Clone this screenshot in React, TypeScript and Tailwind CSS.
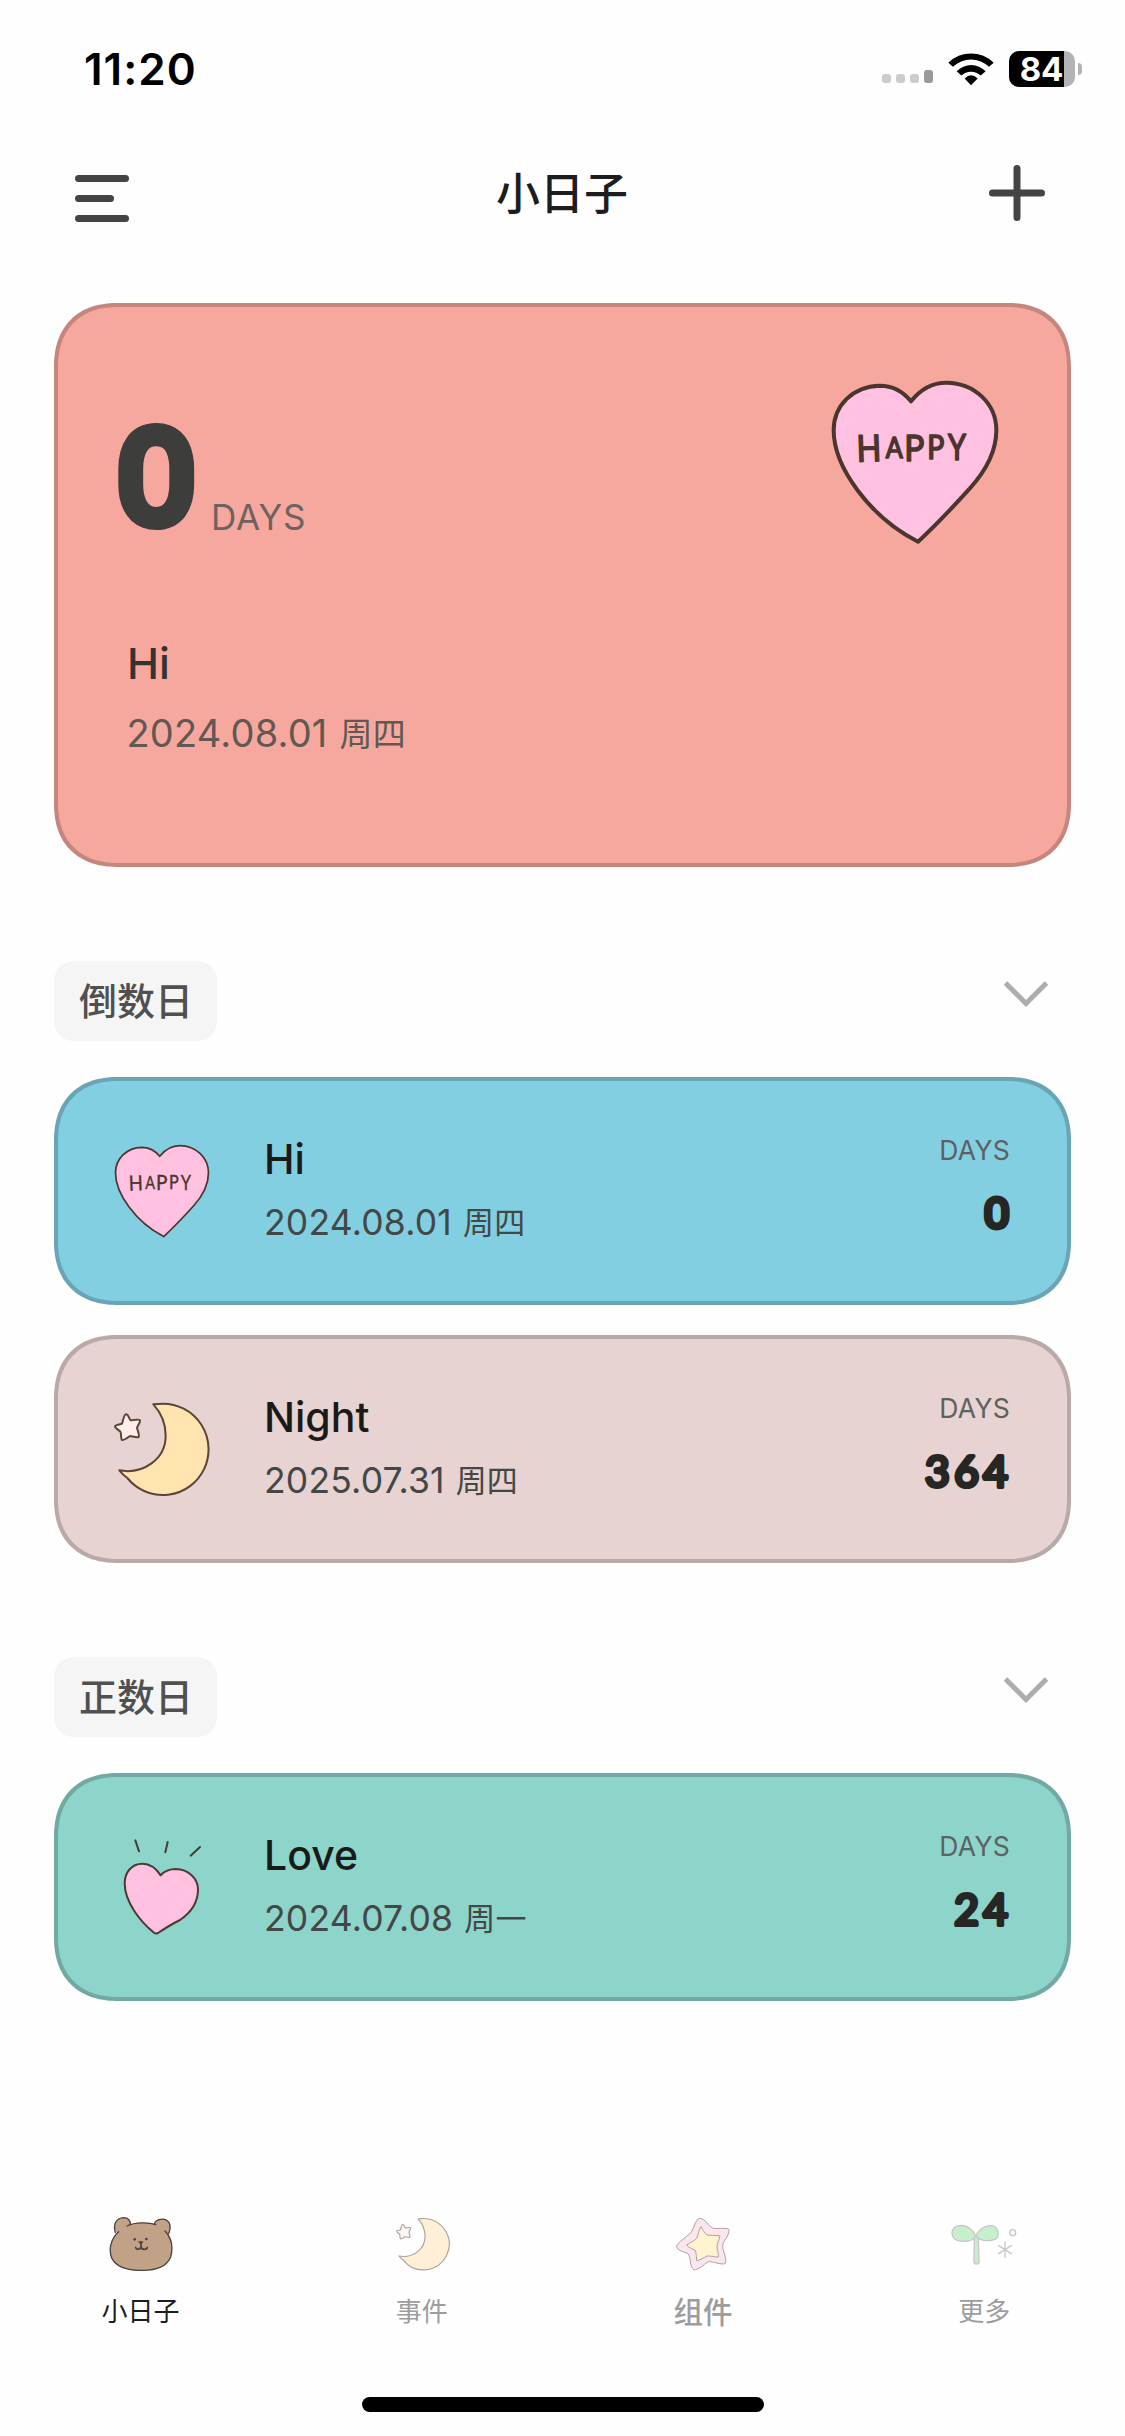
import type { ReactNode } from "react";
import clsx from "clsx";

type IconProps = { className?: string; line?: number };

function HappyHeart({ className, line = 9 }: IconProps) {
  return (
    <svg viewBox="154 263 504 504" className={className} fill="none">
      <path
        d="M394 333C370 303 335 286 300 286C220 288 162 345 162 420C162 530 270 680 415 754C450 722 520 650 570 595C620 540 650 480 650 420C650 340 585 278 500 277C455 277 420 300 394 333Z"
        fill="#ffc1df"
        stroke="#4a352f"
        strokeWidth={line}
        strokeLinejoin="round"
      />
      <g
        fill="#4a352f"
        stroke="#4a352f"
        strokeWidth={line - 7}
        strokeLinejoin="round"
        fontFamily="Lato, sans-serif"
        fontWeight="400"
      >
        <text x="231" y="513" fontSize="110" textLength="74" lengthAdjust="spacingAndGlyphs" transform="rotate(-2 268 475)">H</text>
        <text x="318" y="503" fontSize="86" textLength="51" lengthAdjust="spacingAndGlyphs">A</text>
        <text x="374" y="511" fontSize="112" textLength="60" lengthAdjust="spacingAndGlyphs">P</text>
        <text x="443" y="507" fontSize="96" textLength="51" lengthAdjust="spacingAndGlyphs">P</text>
        <text x="505" y="509" fontSize="108" textLength="54" lengthAdjust="spacingAndGlyphs">Y</text>
      </g>
    </svg>
  );
}

function Moon({ className }: IconProps) {
  return (
    <svg viewBox="222 241 288 288" className={className} stroke="#5c4437" strokeWidth="6" strokeLinejoin="round">
      <path
        d="M340 251Q355 249 369 249A137 137 0 1 1 262 472Q248 462 238 449C310 462 377 415 377 345C377 305 362 275 340 251Z"
        fill="#ffe4b0"
      />
      <path
        d="M258 281C266 281 268 297 272 299C280 298 298 295 300 299C302 305 291 318 291 322C293 328 299 345 296 349C290 352 275 346 270 346C264 350 250 360 246 358C241 353 245 338 241 333C236 328 224 321 225 317C227 312 242 312 246 309C249 300 252 281 258 281Z"
        fill="#ffecec"
      />
    </svg>
  );
}

function LoveHeart({ className }: IconProps) {
  return (
    <svg viewBox="222 597 288 288" className={className} stroke="#4a3a34" strokeWidth="6" strokeLinecap="round" fill="none">
      <path
        d="M362 706C345 680 325 671 308 671C272 671 254 700 254 730C254 785 300 845 343 879Q348 882 354 879C375 865 400 850 420 840C450 820 474 790 474 748C474 715 445 688 408 687C388 687 373 693 362 706Z"
        fill="#ffc1df"
        strokeLinejoin="round"
      />
      <path d="M286 601L297 634M383 606L376 637M480 621L452 647" />
    </svg>
  );
}

function Bear({ className }: IconProps) {
  return (
    <svg viewBox="143 80 198 162" className={className} stroke="#4b433e" strokeWidth="4" strokeLinecap="round" fill="none">
      <path
        d="M165 125C158 102 166 83 190 82C203 82 211 92 210 103C228 96 262 96 281 102C285 89 300 85 312 87C332 92 334 113 325 130C335 150 339 175 331 200C320 227 290 240 247 240C206 241 170 232 155 205C146 180 150 147 172 127Z"
        fill="#c2a287"
        stroke="none"
      />
      <path d="M165 127C158 103 166 83 190 82C204 82 211 92 210 103M281 102C285 89 300 85 312 87C331 92 333 112 325 130" />
      <path d="M200 107C225 95 265 96 287 103M175 124C150 146 144 180 155 205C170 232 206 241 247 240C290 240 320 227 331 200C339 170 333 142 314 122" />
      <path d="M242 160V168M226 171C226 178 241 180 242 168C243 180 260 179 261 171" strokeWidth="5" />
      <path d="M237 155H246L242 161Z" fill="#4b433e" />
      <circle cx="223" cy="147" r="4" fill="#4b433e" stroke="none" />
      <circle cx="258" cy="146" r="4" fill="#4b433e" stroke="none" />
    </svg>
  );
}

function WidgetStar({ className }: IconProps) {
  return (
    <svg viewBox="149 80 198 162" className={className} stroke="#ada1a4" strokeWidth="3" strokeLinejoin="round">
      <path
        d="M238 84C256 84 266 112 280 114C300 116 326 110 326 120C326 140 306 152 307 168C308 185 322 210 314 220C300 224 280 213 264 214C250 222 235 240 220 238C208 230 212 200 203 190C190 184 168 180 169 168C172 155 200 140 212 126C222 112 226 86 238 84Z"
        fill="#fbe5ee"
      />
      <path
        d="M242 109C248 120 254 130 260 134C272 136 288 134 299 137C296 150 290 160 290 168C290 180 296 192 294 200C282 200 270 196 260 197C250 202 240 210 229 211C228 200 228 190 225 180C216 176 205 172 199 164C210 156 222 152 229 144C234 132 236 118 242 109Z"
        fill="#fff4cf"
      />
    </svg>
  );
}

function Sprout({ className }: IconProps) {
  return (
    <svg viewBox="993 80 198 162" className={className} stroke="#c9c5c6" strokeWidth="4" strokeLinecap="round" fill="none">
      <path d="M1063 142L1062 215Q1062 221 1069 221Q1077 221 1077 215L1075 142" fill="#c6f0cd" />
      <path
        d="M1067 137C1055 112 1035 104 1018 106C1000 108 994 122 997 134C1000 150 1015 153 1030 153C1048 153 1062 150 1067 137C1080 112 1100 104 1115 106C1135 110 1137 130 1132 142C1122 152 1100 152 1090 150C1080 148 1072 143 1067 137Z"
        fill="#c6f0cd"
      />
      <circle cx="1178" cy="127" r="9" />
      <path d="M1155 155V200M1136 166L1174 190M1136 190L1174 166" />
    </svg>
  );
}

// Rounded numerals: thin glyphs thickened by a round-joined stroke
function DayCount({ value }: { value: string }) {
  const zero = value === "0";
  return (
    <svg width="130" height="62" viewBox="0 0 130 62" className="overflow-visible text-[#262624]">
      <text
        x={zero ? 128.5 : 132.5}
        y={zero ? 45.2 : 46.5}
        textAnchor="end"
        fontFamily={zero ? "Roboto, sans-serif" : "Lato, sans-serif"}
        fontWeight={zero ? 100 : 400}
        fontSize={zero ? 39.5 : 42.5}
        textLength={zero ? 23.5 : undefined}
        lengthAdjust="spacingAndGlyphs"
        letterSpacing={zero ? 0 : 4.5}
        fill="currentColor"
        stroke="currentColor"
        strokeWidth={zero ? 7 : 4.2}
        strokeLinejoin="round"
      >
        {value}
      </text>
    </svg>
  );
}

type EventItem = {
  title: string;
  date: string;
  weekday: string;
  days: string;
  color: string;
  icon: ReactNode;
};

const countdown: EventItem[] = [
  {
    title: "Hi",
    date: "2024.08.01",
    weekday: "周四",
    days: "0",
    color: "bg-[#83cfe2] border-[#69a5b4]",
    icon: <HappyHeart className="size-24" />,
  },
  {
    title: "Night",
    date: "2025.07.31",
    weekday: "周四",
    days: "364",
    color: "bg-[#e7d3d1] border-[#b9a9a7]",
    icon: <Moon className="size-24" />,
  },
];

const elapsed: EventItem[] = [
  {
    title: "Love",
    date: "2024.07.08",
    weekday: "周一",
    days: "24",
    color: "bg-[#8dd5cb] border-[#71aaa2]",
    icon: <LoveHeart className="size-24" />,
  },
];

const tabs = [
  { label: "小日子", icon: <Bear className="h-[54px] w-[66px]" />, active: true },
  { label: "事件", icon: <Moon className="ml-0.5 size-[54px] opacity-50" /> },
  { label: "组件", icon: <WidgetStar className="h-[54px] w-[66px]" />, large: true },
  { label: "更多", icon: <Sprout className="h-[54px] w-[66px]" /> },
];

function EventCard({ item }: { item: EventItem }) {
  return (
    <div
      className={clsx(
        "flex h-[228px] items-center rounded-[64px] border-4 pr-[57px] pl-14 [corner-shape:superellipse(1.2)]",
        item.color
      )}
    >
      {item.icon}
      <div className="ml-[54px] flex-1">
        <p className="h-[62px] text-[41px] leading-[61px] font-medium text-[#1a1a19]">{item.title}</p>
        <p className="h-[62px] text-[35.5px] leading-[63px] tracking-[0.2px] text-[#434746]">
          {item.date}
          <span className="ml-[11px] align-[1px] text-[31px] leading-none">{item.weekday}</span>
        </p>
      </div>
      <div className="flex flex-col items-end pb-[18px]">
        <p className="h-[62px] text-[26.5px] leading-[61px] tracking-[0.3px] text-[#5c6162]">DAYS</p>
        <DayCount value={item.days} />
      </div>
    </div>
  );
}

function Section({ title, items }: { title: string; items: EventItem[] }) {
  return (
    <section className="mt-[94px]">
      <div className="flex items-start justify-between">
        <h2 className="h-20 w-[163px] rounded-[20px] bg-[#f5f5f5] pl-[25px] text-[38px] leading-[80px] font-medium text-[#505050]">
          {title}
        </h2>
        <svg width="46" height="28" viewBox="0 0 46 28" className="mt-[19px] mr-[22px]" fill="none">
          <path d="M2.5 3L23 23.5L43.5 3" stroke="#adadad" strokeWidth="5" />
        </svg>
      </div>
      <div className="mt-9 flex flex-col gap-[30px]">
        {items.map((item) => (
          <EventCard key={item.title} item={item} />
        ))}
      </div>
    </section>
  );
}

function StatusBar() {
  return (
    <div className="flex h-[138px] items-center justify-between pr-[43px] pl-[84px]">
      <span className="text-[44px] leading-none font-semibold tracking-[1px] text-black">11:20</span>
      <div className="flex items-center">
        <div className="mt-3.5 flex items-end gap-[5px]">
          <span className="size-[9px] rounded-[3px] bg-[#cccccc]" />
          <span className="size-[9px] rounded-[3px] bg-[#cccccc]" />
          <span className="size-[9px] rounded-[3px] bg-[#cccccc]" />
          <span className="h-[13px] w-[9px] rounded-[3px] bg-[#999999]" />
        </div>
        <svg width="46" height="34" viewBox="264 65 138 101" className="ml-[15px]">
          <path d="M265 97A96 96 0 0 1 401 97L387 109A77 77 0 0 0 279 109Z" />
          <path d="M290 122A61 61 0 0 1 377 122L362 135A42 42 0 0 0 304 135Z" />
          <path d="M314 144Q333 125 353 144L333 164Z" />
        </svg>
        <div className="ml-[15px] flex h-9 w-[66px] rounded-[10px] bg-[#b3b3b3]">
          <div className="flex h-9 w-[55px] items-center justify-end rounded-l-[10px] bg-black pr-px">
            <span className="text-[33px] leading-9 font-bold tracking-[-0.3px] text-white">84</span>
          </div>
        </div>
        <span className="ml-[3px] h-3 w-1 rounded-r-full bg-[#b3b3b3]" />
      </div>
    </div>
  );
}

export default function App() {
  return (
    <div className="flex h-[2436px] w-[1125px] flex-col bg-[#fefefe] font-[Inter,'Noto_Sans_CJK_SC',sans-serif]">
      <StatusBar />

      <header className="flex h-[110px] items-center justify-between pr-20 pl-[75px]">
        <div className="mt-[11px] flex w-[60px] flex-col gap-[13px]">
          <span className="h-[7px] w-[54px] rounded-full bg-[#444444]" />
          <span className="h-[7px] w-[39px] rounded-full bg-[#444444]" />
          <span className="h-[7px] w-[54px] rounded-full bg-[#444444]" />
        </div>
        <h1 className="mt-0.5 text-[44px] leading-none font-medium text-[#1d1d1f]">小日子</h1>
        <svg width="56" height="56" viewBox="0 0 56 56" stroke="#444444" strokeWidth="7" strokeLinecap="round">
          <path d="M28 3.5V52.5M3.5 28H52.5" />
        </svg>
      </header>

      <main className="flex-1 px-[54px] pt-[55px]">
        <div className="flex h-[564px] justify-between rounded-[64px] border-4 border-[#c5867e] bg-[#f7a89e] pr-[68px] pl-[58px] [corner-shape:superellipse(1.2)]">
          <div className="pt-[103px]">
            <div className="flex items-end">
              <svg width="80" height="134" viewBox="0 0 80 134" className="overflow-visible">
                <text
                  x="40.3"
                  y="109"
                  textAnchor="middle"
                  fontFamily="Roboto, sans-serif"
                  fontWeight="100"
                  fontSize="119"
                  textLength="70"
                  lengthAdjust="spacingAndGlyphs"
                  fill="#3d3d3b"
                  stroke="#3d3d3b"
                  strokeWidth="20"
                  strokeLinejoin="round"
                >
                  0
                </text>
              </svg>
              <span className="mb-[9px] ml-[15px] text-[35px] leading-9 tracking-[0.9px] text-[#6c635f]">DAYS</span>
            </div>
            <p className="mt-[89px] ml-[11px] text-[43px] leading-[60px] font-medium text-[#353331]">Hi</p>
            <p className="mt-2.5 ml-[10.5px] h-[60px] text-[38px] leading-[60px] tracking-[0.2px] text-[#615753]">
              2024.08.01
              <span className="ml-3 align-[1px] text-[33px] leading-none">周四</span>
            </p>
          </div>
          <HappyHeart className="mt-[71px] size-[168px]" line={12} />
        </div>

        <Section title="倒数日" items={countdown} />
        <Section title="正数日" items={elapsed} />
      </main>

      <nav className="grid h-[219px] grid-cols-4">
        {tabs.map((tab) => (
          <div key={tab.label} className="flex flex-col items-center">
            {tab.icon}
            <span
              className={clsx(
                "mt-[23px] leading-9",
                tab.active ? "text-[#1d1d1f]" : "text-[#9d9d9d]",
                tab.large ? "text-[29.5px] font-medium" : "text-[26px]"
              )}
            >
              {tab.label}
            </span>
          </div>
        ))}
        <div className="col-span-4 mt-auto mb-6 ml-[362px] h-[15px] w-[402px] rounded-full bg-black" />
      </nav>
    </div>
  );
}
